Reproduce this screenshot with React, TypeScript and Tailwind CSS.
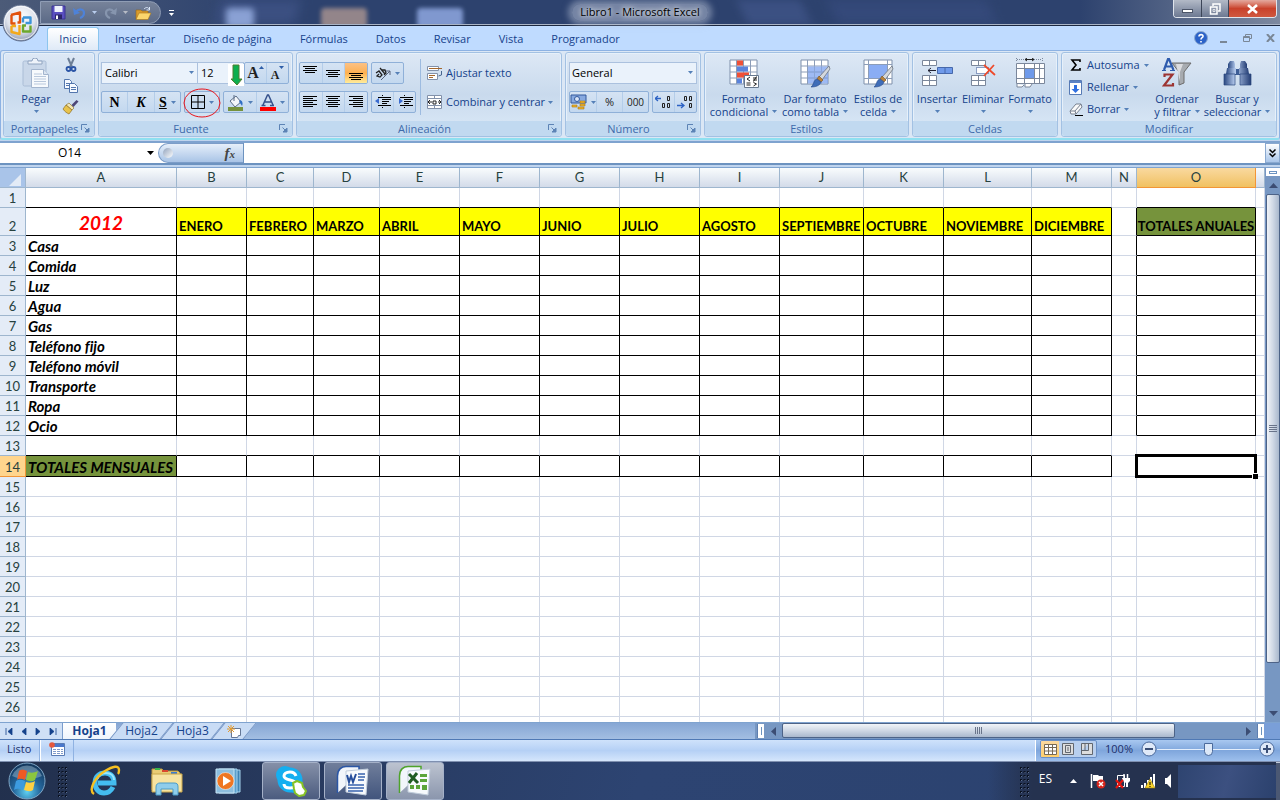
import type { ReactNode } from "react"
import clsx from "clsx"

const tabs = ["Insertar", "Diseño de página", "Fórmulas", "Datos", "Revisar", "Vista", "Programador"]

const columns = [
  { name: "A", width: "w-[151px]" },
  { name: "B", width: "w-[70px]" },
  { name: "C", width: "w-[67px]" },
  { name: "D", width: "w-[66px]" },
  { name: "E", width: "w-[80px]" },
  { name: "F", width: "w-[80px]" },
  { name: "G", width: "w-[80px]" },
  { name: "H", width: "w-[80px]" },
  { name: "I", width: "w-[80px]" },
  { name: "J", width: "w-[84px]" },
  { name: "K", width: "w-[80px]" },
  { name: "L", width: "w-[88px]" },
  { name: "M", width: "w-[80px]" },
  { name: "N", width: "w-[25px]" },
  { name: "O", width: "w-[119px]" },
  { name: "", width: "w-auto" },
]

const months = [
  "ENERO", "FEBRERO", "MARZO", "ABRIL", "MAYO", "JUNIO",
  "JULIO", "AGOSTO", "SEPTIEMBRE", "OCTUBRE", "NOVIEMBRE", "DICIEMBRE",
]

const expenses = [
  "Casa", "Comida", "Luz", "Agua", "Gas", "Teléfono fijo", "Teléfono móvil", "Transporte", "Ropa", "Ocio",
]

const rows = Array.from({ length: 27 }, (_, i) => i + 1)

function hasBox(col: number, row: number) {
  const inRows = (row >= 2 && row <= 12) || row === 14
  return inRows && ((col >= 0 && col <= 12) || col === 14)
}

function cellText(col: number, row: number) {
  if (row === 2) {
    if (col === 0) return "2012"
    if (col === 14) return "TOTALES ANUALES"
    return months[col - 1] ?? ""
  }
  if (col === 0 && row >= 3 && row <= 12) return expenses[row - 3]
  if (col === 0 && row === 14) return "TOTALES MENSUALES"
  return ""
}

function Caret({ className = "fill-[#5580b8]" }: { className?: string }) {
  return (
    <svg width="5" height="3" viewBox="0 0 5 3" className={clsx("shrink-0", className)} aria-hidden="true">
      <path d="M0 0h5L2.500 3z" />
    </svg>
  )
}

/* ---------- Ribbon building blocks ---------- */

function Group({ title, className, launcher, children }: {
  title: string
  className: string
  launcher?: boolean
  children: ReactNode
}) {
  return (
    <section
      className={clsx(
        "flex h-[85px] flex-col rounded-[3px] border border-[#a3c1e3] bg-linear-to-b from-[#dde8f5] via-[#c9daed] to-[#dceaf8] shadow-[inset_0_0_0_1px_#e6f0fa]",
        className,
      )}
    >
      <div className="flex-1 px-[2px]">{children}</div>
      <div className="flex h-[15px] items-center rounded-b-[3px] bg-[#c1d9f0] px-1">
        <span className="flex-1 text-center leading-[15px] text-[#3e6aaa]">{title}</span>
        {launcher && (
          <button aria-label={`Opciones de ${title}`}>
            <svg width="9" height="9" viewBox="0 0 9 9" fill="none" stroke="#5c83b5">
              <path d="M.5 6V.5H6M3.500 3.500l3 3" />
              <path d="M8 4v4H4z" fill="#5c83b5" />
            </svg>
          </button>
        )}
      </div>
    </section>
  )
}

function ButtonBar({ className, children }: { className?: string; children: ReactNode }) {
  return (
    <div
      className={clsx(
        "flex h-[22px] shrink-0 divide-x divide-[#b4cde9] overflow-hidden rounded-[2px] border border-[#8fb0d8] bg-linear-to-b from-[#d5e3f3] to-[#c3d8ef]",
        className,
      )}
    >
      {children}
    </div>
  )
}

function Tool({ label, active, caret, children }: {
  label: string
  active?: boolean
  caret?: boolean
  children: ReactNode
}) {
  return (
    <button
      aria-label={label}
      className={clsx(
        "flex flex-1 items-center justify-center gap-1",
        active && "bg-linear-to-b from-[#fcc184] via-[#fdb04f] to-[#ffec9a]",
      )}
    >
      {children}
      {caret && <Caret />}
    </button>
  )
}

function BigButton({ lines, className, caretBelow, icon }: {
  lines: string[]
  className: string
  caretBelow?: boolean
  icon: ReactNode
}) {
  return (
    <button className={clsx("flex flex-col items-center pt-1 leading-[13px] whitespace-nowrap", className)}>
      <span className="mb-[3px] flex h-8 items-center">{icon}</span>
      {lines.map((line, i) => (
        <span key={line} className="flex items-center gap-1">
          {line}
          {!caretBelow && i === lines.length - 1 && <Caret />}
        </span>
      ))}
      {caretBelow && <span className="flex h-3 items-center"><Caret /></span>}
    </button>
  )
}

function Lines({ spans }: { spans: [number, number, number][] }) {
  return (
    <svg width="15" height="14" viewBox="0 0 15 14" stroke="#000" shapeRendering="crispEdges">
      {spans.map(([x1, x2, y]) => (
        <path key={y} d={`M${x1} ${y + 0.5}H${x2}`} />
      ))}
    </svg>
  )
}

/* ---------- Icons ---------- */

function OfficeLogo() {
  return (
    <svg width="38" height="38" viewBox="0 0 38 38">
      <defs>
        <radialGradient id="orb" cx="50%" cy="35%" r="65%">
          <stop offset="0" stopColor="#fff" />
          <stop offset="0.6" stopColor="#dfe3ec" />
          <stop offset="1" stopColor="#8f9bb3" />
        </radialGradient>
      </defs>
      <circle cx="19" cy="19" r="18" fill="url(#orb)" stroke="#5c6b89" />
      <circle cx="19" cy="19" r="16.500" fill="none" stroke="#fff" strokeOpacity=".7" />
      <g fill="none" strokeWidth="2.400" strokeLinejoin="round">
        <path d="M9 11l9-2.500v10h-2.500M9.500 11v8.500h4" stroke="#e2520c" />
        <path d="M21 13.500h7.500v5.500h-5M21 13.500v5" stroke="#3c94d8" />
        <path d="M9.500 22h4.500M9.500 22v6l8 2v-9" stroke="#f3a91a" />
        <path d="M28.500 21.500v6H21v-6h3" stroke="#6ca82c" />
      </g>
    </svg>
  )
}

function SaveIcon() {
  return (
    <svg width="15" height="15" viewBox="0 0 15 15">
      <path d="M1 1h13v13H1z" fill="#5a4fc0" stroke="#3b3494" />
      <path d="M3.500 1h8v6h-8z" fill="#eef2fb" />
      <path d="M4 9.500h7V14H4z" fill="#2a2568" />
      <path d="M5 10.500h2V14H5z" fill="#fff" />
    </svg>
  )
}

function UndoIcon({ color, flip }: { color: string; flip?: boolean }) {
  return (
    <svg width="13" height="12" viewBox="0 0 13 12">
      <g transform={flip ? "matrix(-1 0 0 1 13 0)" : undefined}>
        <path d="M3 5C6 1 11 2 11 6c0 2-1.500 4-4 5" fill="none" stroke={color} strokeWidth="2.200" />
        <path d="M0 1l1 7 6-2z" fill={color} />
      </g>
    </svg>
  )
}

function FolderIcon() {
  return (
    <svg width="17" height="14" viewBox="0 0 17 14">
      <path d="M1 4h5l1 1h6v8H1z" fill="#d89a2c" stroke="#94651a" strokeWidth=".6" />
      <path d="M4 7h12l-3 6.500H1z" fill="#fbd66c" stroke="#a8771d" strokeWidth=".6" />
      <path d="M9 3c2-2 4-2 5 0M14.500 1v3h-3" fill="none" stroke="#dbe7f8" />
    </svg>
  )
}

function PasteIcon() {
  return (
    <svg width="28" height="30" viewBox="0 0 28 30">
      <rect x="1" y="3" width="23" height="25" rx="1.500" fill="#c9d7e9" stroke="#aabdd6" />
      <path d="M6 6V3h4a3 3 0 016 0h4v3z" fill="#eef3fa" stroke="#90a4c0" />
      <path d="M9.500 11.500h12l5 5v13h-17z" fill="#f7fafd" stroke="#a3b5ce" />
      <path d="M21.500 11.500v5h5" fill="#dbe5f1" stroke="#a3b5ce" />
      <path d="M12 16h8M12 18.500h12M12 21h12M12 23.500h12M12 26h12" stroke="#b9c8dc" />
    </svg>
  )
}

function CutIcon() {
  return (
    <svg width="16" height="16" viewBox="0 0 16 16" fill="none">
      <path d="M5 1l4 9M11 1L7 10" stroke="#6d7e96" strokeWidth="2" />
      <circle cx="5.500" cy="12" r="2" stroke="#2b55a6" strokeWidth="1.800" />
      <circle cx="10.500" cy="12" r="2" stroke="#2b55a6" strokeWidth="1.800" />
    </svg>
  )
}

function CopyIcon() {
  return (
    <svg width="16" height="14" viewBox="0 0 16 14" stroke="#5376ad" fill="#f6faff">
      <path d="M1.500.5h5l2 2v7h-7z" />
      <path d="M3 4.500h4M3 6.500h4" />
      <path d="M6.500 4.500h5l3 3v6h-8z" />
      <path d="M8 8.500h5M8 10.500h5" />
    </svg>
  )
}

function BrushIcon() {
  return (
    <svg width="17" height="16" viewBox="0 0 17 16">
      <path d="M14.500 1l2 1.500-5 5.500-2-2z" fill="#4d4676" />
      <path d="M7 4l5 5-2 2-6-5z" fill="#f3e6b4" stroke="#8f7a34" strokeWidth=".7" />
      <path d="M4 6l6 5-3 4c-2-1-4-2-6-5z" fill="#e8c34c" stroke="#8f7026" strokeWidth=".7" />
    </svg>
  )
}

function GridBase({ fill = "#fff" }: { fill?: string }) {
  return (
    <>
      <path d="M1 1h27v24H1z" fill={fill} stroke="#7f90ab" />
      <path d="M7.500 1v24M14.500 1v24M21.500 1v24M1 7h27M1 13h27M1 19h27" stroke="#8c9db8" />
    </>
  )
}

function ConditionalIcon() {
  return (
    <svg width="30" height="29" viewBox="0 0 30 29">
      <GridBase />
      <path d="M8 1.500h6v5H8zM8 13.500h12v5H8z" fill="#ef5037" />
      <path d="M8 7.500h11v5H8zM8 19.500h5v5H8z" fill="#5a83dc" />
      <path d="M15.500 16.500h14v12h-14z" fill="#fff" stroke="#66788f" />
      <path d="M21 18l-3 2 3 2M17.500 24h4M17.500 26h4M24 19h4M24 21h4M27.500 17.500l-3 5M24.500 23.500l3 1.500-3 2" stroke="#222" fill="none" />
    </svg>
  )
}

function PaintBrush() {
  return (
    <>
      <path d="M29 7l1 3-8 11-3-3z" fill="#d4d8dd" stroke="#6f7680" strokeWidth=".8" />
      <path d="M19 17l4 4-2 2-4-3z" fill="#b9823a" stroke="#77501f" strokeWidth=".6" />
      <path d="M17 20l4 3c-1 4-6 5-10 5 3-2 2-7 6-8z" fill="#3f6db8" stroke="#2b4c8a" strokeWidth=".6" />
    </>
  )
}

function TableStyleIcon() {
  return (
    <svg width="31" height="29" viewBox="0 0 31 29">
      <GridBase />
      <path d="M8 7.500h20v17H8z" fill="#7ea3f0" fillOpacity=".75" />
      <path d="M14.500 7v18M21.500 7v18M8 13h20M8 19h20" stroke="#8ba5d6" />
      <PaintBrush />
    </svg>
  )
}

function CellStyleIcon() {
  return (
    <svg width="31" height="29" viewBox="0 0 31 29">
      <path d="M1 1h28v24H1z" fill="#fff" stroke="#7f90ab" />
      <path d="M5.500 1v24M24.500 1v24M1 5.500h28M1 19.500h28" stroke="#8c9db8" />
      <path d="M6 6h18v13H6z" fill="#8aadf4" />
      <PaintBrush />
    </svg>
  )
}

function InsertIcon() {
  return (
    <svg width="31" height="28" viewBox="0 0 31 28" fill="#fff" stroke="#7b879b">
      <path d="M.5 1.500h14v5H.5zM7.500 1.500v5M.5 16.500h14v10H.5zM7.500 16.500v10M.5 21.500h14" />
      <path d="M15.500 8.500h15v6h-15zM23 8.500v6" fill="#6f9aea" stroke="#4668ab" />
      <path d="M6 11.500h8M9 9l-3 2.500L9 14" fill="none" stroke="#223" />
    </svg>
  )
}

function DeleteIcon() {
  return (
    <svg width="26" height="28" viewBox="0 0 26 28" fill="#fff" stroke="#7b879b">
      <path d="M1.500 1.500h14v5h-14zM8.500 1.500v5M1.500 16.500h14v10h-14zM8.500 16.500v10M1.500 21.500h14" />
      <path d="M6.500 8.500h12v6h-12z" stroke="#2d4b8d" strokeDasharray="1 1" />
      <path d="M14 6l11 10M24 6L14 17" stroke="#ee4a2b" strokeWidth="1.800" fill="none" />
    </svg>
  )
}

function FormatIcon() {
  return (
    <svg width="31" height="30" viewBox="0 0 31 30" fill="#fff" stroke="#7b879b">
      <path d="M1.500 0v4M27.500 0v4M2 1.500h8M19 1.500h8" strokeDasharray="1 1" />
      <path d="M10 1.500h9M12 0l-2 1.500L12 3M17 0l2 1.500L17 3" stroke="#222" fill="none" />
      <path d="M1.500 5.500h28v20h-28zM9.500 5.500v20M19.500 5.500v20M24.500 5.500v20M1.500 10.500h28M1.500 20.500h28" />
      <path d="M10 11h9v9h-9z" fill="#6f9aea" stroke="none" />
      <path d="M2 26v3h5l2-2M10 26v3h5l2-3" />
    </svg>
  )
}

function SortIcon() {
  return (
    <svg width="30" height="30" viewBox="0 0 30 30">
      <path d="M10 5h19l-7 9v11l-5 2V14z" fill="#a7abb0" stroke="#6c6c6c" />
      <path d="M14 6h7l-3 8v10z" fill="#e8e9eb" fillOpacity=".8" />
      <path d="M2 12l4-11h1L11.500 12M4 8.500h5" fill="none" stroke="#2f5cae" strokeWidth="2.200" />
      <path d="M0 12.500h4M8 12.500h5" stroke="#2f5cae" />
      <path d="M2.500 19v-2.500h8L2 27.500h9V25" fill="none" stroke="#9c3433" strokeWidth="2.200" />
    </svg>
  )
}

function BinocularsIcon() {
  return (
    <svg width="29" height="26" viewBox="0 0 29 26">
      <defs>
        <linearGradient id="bino">
          <stop offset="0" stopColor="#294780" />
          <stop offset=".4" stopColor="#b5caed" />
          <stop offset="1" stopColor="#233d74" />
        </linearGradient>
      </defs>
      <path d="M11 9h7v6h-7z" fill="#3d5d96" />
      <path d="M7 1h4l1 3v5H5V4zM18 1h4l2 3v5h-7V4z" fill="url(#bino)" />
      <path d="M4 8h9v6H3zM16 8h9l1 6H16z" fill="url(#bino)" />
      <path d="M1 14h11v11H1zM17 14h11v11H17z" fill="url(#bino)" stroke="#2b4880" strokeWidth=".7" />
    </svg>
  )
}

function Grip() {
  return (
    <svg width="9" height="31" viewBox="0 0 9 31" aria-hidden="true">
      <path d="M1 1v30M4.500 1v30M8 1v30" stroke="#0a1120" strokeWidth="2" strokeDasharray="2 2" />
      <path d="M1.500 2v29M5 2v29M8.500 2v29" stroke="#5d6f92" strokeDasharray="1 3" />
    </svg>
  )
}

function StartOrb() {
  return (
    <svg width="38" height="38" viewBox="0 0 38 38">
      <defs>
        <radialGradient id="start" cx="50%" cy="80%" r="75%">
          <stop offset="0" stopColor="#5fd0f2" />
          <stop offset=".5" stopColor="#24669c" />
          <stop offset="1" stopColor="#14395f" />
        </radialGradient>
      </defs>
      <circle cx="19" cy="19" r="18" fill="url(#start)" stroke="#7fa6c6" />
      <path d="M4 14a16 16 0 0130 0c-8 4-22 4-30 0z" fill="#cfe4f2" fillOpacity=".35" />
      <path d="M11 9c3-2 5-1 8 0l-2 9c-3-1-5-2-8 0z" fill="#ee5a24" />
      <path d="M20 10c3 1 6 1 10-1l-3 9c-3 2-6 1-9 0z" fill="#8cc63e" />
      <path d="M8 19c3-2 6-1 9 0l-2 9c-3-1-6-2-9 0z" fill="#3c9be0" />
      <path d="M18 20c3 1 6 1 9-1l-2 9c-3 2-6 1-9 0z" fill="#fdd043" />
    </svg>
  )
}

function ExplorerEIcon() {
  return (
    <svg width="32" height="32" viewBox="0 0 32 32" fill="none">
      <path d="M24 22c-2 4-5 6-9 6-5 0-9-4-9-10S10 8 16 8s9 4 9 10H9" stroke="#44bdf0" strokeWidth="5" />
      <path d="M25 15c0-4-3-7-8-7-4 0-7 2-9 6" stroke="#9be5fb" strokeWidth="2" />
      <path d="M5 29C-1 25 6 12 16 6 24 1 30 0 30 5c0 1 0 3-1 4" stroke="#f6c021" strokeWidth="2.400" />
    </svg>
  )
}

function FoldersIcon() {
  return (
    <svg width="34" height="30" viewBox="0 0 34 30">
      <path d="M2 3h10l2 2h14l2 2v17H2z" fill="#e9cb74" stroke="#b8953e" />
      <path d="M5 2h5v2H5z" fill="#3bb44a" />
      <path d="M12 4h6v2h-6z" fill="#d9482f" />
      <path d="M21 6h6v2h-6z" fill="#3b7bd0" />
      <path d="M2 8h30v18H2z" fill="#f7e3a1" stroke="#c9a64b" />
      <path d="M6 29v-8c0-3 2-4 4-4h14c3 0 4 1 4 4v8h-5v-6H11v6z" fill="#8fcdec" stroke="#4c9cc8" />
    </svg>
  )
}

function MediaIcon() {
  return (
    <svg width="27" height="26" viewBox="0 0 27 26">
      <path d="M8 2h17v22H8z" fill="#3f83b4" stroke="#a6d3ee" />
      <path d="M4 1h18v24H4z" fill="#5ba0cd" stroke="#a6d3ee" />
      <path d="M1 1h18v24H1z" fill="#8dbede" stroke="#c8e5f5" />
      <circle cx="10.500" cy="13" r="8.500" fill="#ee7622" stroke="#fff" strokeOpacity=".5" />
      <path d="M8 8l8 5-8 5z" fill="#fff" />
    </svg>
  )
}

function SkypeIcon() {
  return (
    <svg width="32" height="32" viewBox="0 0 32 32">
      <circle cx="10" cy="10" r="9" fill="#16aff0" />
      <circle cx="15" cy="15" r="12.500" fill="#16aff0" />
      <circle cx="20" cy="20" r="8" fill="#16aff0" />
      <path d="M21 11c-1-3-4-4-6-4-4 0-6 2-6 4 0 5 12 3 12 8 0 3-3 4-6 4s-6-1-6-4" fill="none" stroke="#fff" strokeWidth="3" />
      <path d="M18 18l4-2 5 2 1 4 3 4-2 4-5 1-4-3-1-4z" fill="#fff" stroke="#86c224" strokeWidth="2" strokeLinejoin="round" />
    </svg>
  )
}

function DocIcon({ color, children }: { color: string; children: ReactNode }) {
  return (
    <svg width="34" height="32" viewBox="0 0 34 32">
      <path d="M1.500 28V11C1.500 4 6 1.500 10 1.500h13V8" fill="#f2f6fb" stroke={color} strokeWidth="1.500" />
      <path d="M10 6l22-2-2 26-20-3z" fill="#f7fafd" stroke="#c0ccdb" />
      {children}
    </svg>
  )
}

/* ---------- Window ---------- */

function TitleBar() {
  return (
    <header className="relative grid h-[26px] shrink-0 grid-cols-[1fr_auto_1fr] border-b border-[#1b2740] bg-linear-to-r from-[#4c5b78] via-[#2d426e] via-20% to-[#2d426e] shadow-[inset_0_-1px_0_#a9b4c6]">
      <div className="pointer-events-none absolute inset-x-0 top-0 bottom-px overflow-hidden" aria-hidden="true">
        <div className="absolute inset-y-0 left-[17%] w-20 -skew-x-12 bg-[#3c5082] blur-[6px]" />
        <div className="absolute inset-y-0 left-[58%] w-16 skew-x-24 bg-[#3b5082] blur-[4px]" />
        <div className="absolute inset-y-0 left-[65%] w-40 skew-x-24 bg-[#34497a] blur-[6px]" />
        <div className="absolute inset-y-0 right-0 w-[200px] bg-linear-to-r from-transparent to-[#7d89a0]" />
        <div className="absolute top-2 left-[226px] h-5 w-7 rounded bg-[#8aa1d4] blur-[3px]" />
        <div className="absolute top-2 left-[321px] h-5 w-[46px] rounded bg-[#93858a] blur-[2px]" />
        <div className="absolute top-2 left-[417px] h-5 w-[46px] rounded bg-[#8098cf] blur-[2px]" />
      </div>
      <div className="relative flex items-center pl-10">
        <div className="flex h-[23px] items-center gap-[7px] rounded-r-full border border-[#8f9db5] bg-linear-to-b from-[#77839a] to-[#5b6a87] pr-2 pl-[10px]">
          <button aria-label="Guardar"><SaveIcon /></button>
          <button aria-label="Deshacer" className="flex items-center gap-[6px]">
            <UndoIcon color="#4e82d8" />
            <Caret className="fill-[#b9cdee]" />
          </button>
          <button aria-label="Rehacer" className="flex items-center gap-[6px]">
            <UndoIcon color="#8695ae" flip />
            <Caret className="fill-[#b7bcc6]" />
          </button>
          <button aria-label="Abrir"><FolderIcon /></button>
        </div>
        <button aria-label="Personalizar barra" className="ml-2 flex flex-col items-center gap-[2px]">
          <span className="h-px w-[5px] bg-white" />
          <Caret className="fill-white" />
        </button>
      </div>
      <h1 className="relative self-center rounded-full bg-[#b9c4d8]/50 px-2 text-[11px] text-black shadow-[0_0_6px_4px_rgb(185_196_216/0.5)] [text-shadow:0_0_4px_#fff,0_0_8px_#fff]">
        Libro1 - Microsoft Excel
      </h1>
      <div className="relative mr-[3px] flex h-[18px] justify-self-end divide-x divide-[#3c4558] overflow-hidden rounded-b-[4px] border border-t-0 border-[#dfe4ec]">
        <button aria-label="Minimizar" className="flex w-7 items-center justify-center bg-linear-to-b from-[#b3bac7] to-[#6d7992]">
          <span className="mt-1 h-1 w-[11px] border border-[#4c5568] bg-white" />
        </button>
        <button aria-label="Restaurar" className="flex w-[27px] items-center justify-center bg-linear-to-b from-[#b3bac7] to-[#6d7992]">
          <svg width="12" height="12" viewBox="0 0 12 12" fill="none" stroke="#fff" strokeWidth="1.500">
            <path d="M4 3V1h7v7H9M1.500 4H8v7H1.500z" />
            <path d="M4 6.500h2v2H4z" strokeWidth=".7" />
          </svg>
        </button>
        <button aria-label="Cerrar" className="flex w-[47px] items-center justify-center bg-linear-to-b from-[#e3a99f] via-[#c9412b] to-[#d0583f]">
          <svg width="11" height="10" viewBox="0 0 11 10" stroke="#fff" strokeWidth="2.600">
            <path d="M1 1l9 8M10 1L1 9" />
          </svg>
        </button>
      </div>
      <button aria-label="Botón de Office" className="absolute top-1 left-[2px] z-10">
        <OfficeLogo />
      </button>
    </header>
  )
}

function RibbonTabs() {
  return (
    <nav className="flex h-6 shrink-0 items-end bg-[#bfdbff] pr-[5px] pl-[47px]">
      <button className="mr-[2px] h-[23px] w-[52px] rounded-t-[3px] border border-b-0 border-[#8cc5ee] bg-linear-to-b from-white to-[#dfeaf7]">
        Inicio
      </button>
      {tabs.map((tab) => (
        <button key={tab} className="h-[22px] shrink-0 px-[14px]">
          {tab}
        </button>
      ))}
      <div className="ml-auto flex items-center gap-3 self-center">
        <button aria-label="Ayuda">
          <svg width="14" height="14" viewBox="0 0 14 14">
            <circle cx="7" cy="7" r="6.500" fill="#2b62c8" stroke="#8da9cf" />
            <path d="M5 5.500C5 3 9.500 3 9 5.500 8.800 6.800 7 6.800 7 8.500M7 10v1.500" fill="none" stroke="#fff" strokeWidth="1.600" />
          </svg>
        </button>
        <button aria-label="Minimizar libro" className="mt-2 mr-1 h-[2px] w-[7px] bg-[#7a8796]" />
        <button aria-label="Restaurar libro" className="mr-[2px]">
          <svg width="9" height="8" viewBox="0 0 9 8" fill="none" stroke="#7a8796">
            <path d="M2.500 2V.5h6v4H7M.5 2.500h6v5h-6zM.5 3.500h6" />
          </svg>
        </button>
        <button aria-label="Cerrar libro">
          <svg width="9" height="8" viewBox="0 0 9 8" stroke="#7a8796" strokeWidth="2">
            <path d="M1 0l7 8M8 0L1 8" />
          </svg>
        </button>
      </div>
    </nav>
  )
}

function Ribbon() {
  return (
    <div className="flex shrink-0 gap-[3px] overflow-hidden rounded-[3px] border border-b-2 border-[#8db2e3] border-b-[#8fe0f0] bg-[#dbe7f5] px-[2px] py-px">
      <Group title="Portapapeles" className="w-[92px] shrink-0" launcher>
        <div className="flex">
          <BigButton lines={["Pegar"]} caretBelow className="ml-2 w-11" icon={<PasteIcon />} />
          <div className="ml-1 flex flex-col items-center gap-[6px] pt-1">
            <button aria-label="Cortar"><CutIcon /></button>
            <button aria-label="Copiar"><CopyIcon /></button>
            <button aria-label="Copiar formato"><BrushIcon /></button>
          </div>
        </div>
      </Group>

      <Group title="Fuente" className="w-[195px] shrink-0" launcher>
        <div className="flex flex-col gap-[7px] pt-[9px]">
          <div className="flex">
            <div className="relative w-[97px]">
              <select aria-label="Fuente" className="h-[22px] w-full appearance-none border border-[#abc1de] bg-[#eaf2fb] pl-[3px] text-black">
                <option>Calibri</option>
              </select>
              <span className="pointer-events-none absolute top-[9px] right-1"><Caret /></span>
            </div>
            <div className="relative w-[46px]">
              <select aria-label="Tamaño de fuente" className="h-[22px] w-full appearance-none border border-l-0 border-[#abc1de] bg-[#eaf2fb] pl-[3px] text-black">
                <option>12</option>
              </select>
              <svg width="16" height="22" viewBox="0 0 16 22" className="pointer-events-none absolute top-[2px] right-0">
                <path d="M0 0h16v22H0z" fill="#fff" />
                <path d="M5 1h6v14h3l-5 6-6-6h2z" fill="#0cae4e" stroke="#4f7c31" />
              </svg>
            </div>
            <ButtonBar className="w-[45px]">
              <Tool label="Aumentar tamaño">
                <span className="font-['Liberation_Serif'] text-[16px] font-bold text-[#222]">A</span>
                <svg width="5" height="3" viewBox="0 0 5 3" className="-ml-1 mb-3 fill-[#2e5ea8]"><path d="M0 3h5L2.500 0z" /></svg>
              </Tool>
              <Tool label="Disminuir tamaño">
                <span className="mt-1 font-['Liberation_Serif'] text-[12px] font-bold text-[#222]">A</span>
                <svg width="5" height="3" viewBox="0 0 5 3" className="-ml-1 mb-3 fill-[#2e5ea8]"><path d="M0 0h5L2.500 3z" /></svg>
              </Tool>
            </ButtonBar>
          </div>
          <div className="flex gap-[3px]">
            <ButtonBar className="w-[80px] font-['Liberation_Serif'] text-[14px] font-bold text-black">
              <Tool label="Negrita">N</Tool>
              <Tool label="Cursiva"><i>K</i></Tool>
              <Tool label="Subrayado" caret><u>S</u></Tool>
            </ButtonBar>
            <div className="relative w-9">
              <ButtonBar>
                <Tool label="Bordes" caret>
                  <svg width="14" height="14" viewBox="0 0 14 14" fill="none" stroke="#000">
                    <path d="M1 .5h12.500v13H.5V.5zM7 1v12M1 7h12" />
                  </svg>
                </Tool>
              </ButtonBar>
              <svg width="38" height="30" viewBox="0 0 38 30" className="pointer-events-none absolute -top-[3px] -left-[1px] z-10">
                <ellipse cx="19" cy="15" rx="18" ry="14" fill="none" stroke="#e8141c" />
              </svg>
            </div>
            <ButtonBar className="w-[66px]">
              <Tool label="Color de relleno" caret>
                <svg width="17" height="17" viewBox="0 0 17 17">
                  <path d="M3 7l6-5 5 6-6 5z" fill="#f3f6fa" stroke="#5b6c86" />
                  <path d="M7 1v6" stroke="#5b6c86" />
                  <path d="M13 6c3 1 3 4 2 6-1-2-2-3-3-4z" fill="#2f6ec4" />
                  <path d="M1 13h15v4H1z" fill="#76923c" />
                </svg>
              </Tool>
              <Tool label="Color de fuente" caret>
                <svg width="16" height="17" viewBox="0 0 16 17">
                  <path d="M3 11L7.500 1h1L13 11M5 8h6M1.500 11.500h4M10 11.500h4" fill="none" stroke="#36528c" strokeWidth="1.500" />
                  <path d="M0 13h16v4H0z" fill="#f00" />
                </svg>
              </Tool>
            </ButtonBar>
          </div>
        </div>
      </Group>

      <Group title="Alineación" className="w-[266px] shrink-0" launcher>
        <div className="flex">
          <div className="flex flex-col gap-[7px] pt-[9px]">
            <div className="flex gap-[3px]">
              <ButtonBar className="w-[69px]">
                <Tool label="Alinear arriba"><Lines spans={[[0, 14, 0], [2, 12, 2], [0, 14, 4], [2, 12, 6]]} /></Tool>
                <Tool label="Alinear en el medio"><Lines spans={[[0, 14, 4], [2, 12, 6], [0, 14, 8], [2, 12, 10]]} /></Tool>
                <Tool label="Alinear abajo" active><Lines spans={[[0, 14, 7], [2, 12, 9], [0, 14, 11], [2, 12, 13]]} /></Tool>
              </ButtonBar>
              <ButtonBar className="w-[33px]">
                <Tool label="Orientación" caret>
                  <svg width="16" height="15" viewBox="0 0 16 15" fill="none" stroke="#222">
                    <path d="M1 7l3-2 3 4-2 2-3-1 2-2M5 2l5 6M7 4l3 0 1 3-2 2" strokeWidth="1.300" />
                    <path d="M6 14l9-9M15 9V5h-4" stroke="#56617a" />
                  </svg>
                </Tool>
              </ButtonBar>
            </div>
            <div className="flex gap-[3px]">
              <ButtonBar className="w-[69px]">
                <Tool label="Izquierda"><Lines spans={[[0, 14, 1], [0, 10, 3], [0, 14, 5], [0, 10, 7], [0, 14, 9], [0, 10, 11]]} /></Tool>
                <Tool label="Centrar"><Lines spans={[[0, 14, 1], [2, 12, 3], [0, 14, 5], [2, 12, 7], [0, 14, 9], [2, 12, 11]]} /></Tool>
                <Tool label="Derecha"><Lines spans={[[0, 14, 1], [4, 14, 3], [0, 14, 5], [4, 14, 7], [0, 14, 9], [4, 14, 11]]} /></Tool>
              </ButtonBar>
              <ButtonBar className="w-[45px]">
                {["Disminuir sangría", "Aumentar sangría"].map((label, i) => (
                  <Tool key={label} label={label}>
                    <svg width="16" height="14" viewBox="0 0 16 14" stroke="#000">
                      <path d="M3 2.500h13M8 4.500h8M8 6.500h6M8 8.500h4M3 10.500h13" />
                      <path d="M7.500 0v14" strokeDasharray="1 1" />
                      <path d={i === 0 ? "M0 6l4-3v6z" : "M6 6L2 3v6z"} fill="#3a6bd0" stroke="none" />
                    </svg>
                  </Tool>
                ))}
              </ButtonBar>
            </div>
          </div>
          <div className="mt-[6px] ml-1 h-[56px] w-px bg-[#9dbbe0]" />
          <div className="flex flex-col gap-[7px] pt-[9px] pl-[6px]">
            <button className="flex h-[22px] items-center gap-[3px]">
              <svg width="16" height="16" viewBox="0 0 16 16" fill="#fff" stroke="#8291aa">
                <path d="M.5 1.500h11v4H.5zM.5 8.500h10v6H.5z" />
                <path d="M2 3.500h13M2 10.500h6M2 12.500h4" stroke="#a4672d" />
                <path d="M14.500 6v4l-3 1" fill="none" stroke="#47668f" />
              </svg>
              Ajustar texto
            </button>
            <button className="flex h-[22px] items-center gap-[3px] whitespace-nowrap">
              <svg width="16" height="16" viewBox="0 0 16 16" fill="#fff" stroke="#8291aa">
                <path d="M.5 1.500h14v13H.5zM7.500 1.500v3M7.500 11v3M.5 4.500h14M.5 11.500h14" />
                <path d="M1 8h4M3 6L1 8l2 2M14 8h-3M12 6l2 2-2 2M6 7h3v3H6z" stroke="#222" fill="none" />
              </svg>
              Combinar y centrar
              <Caret />
            </button>
          </div>
        </div>
      </Group>

      <Group title="Número" className="w-[136px] shrink-0" launcher>
        <div className="flex flex-col gap-[7px] pt-[9px] pl-px">
          <div className="relative w-32">
            <select aria-label="Formato de número" className="h-[22px] w-full appearance-none border border-[#abc1de] bg-[#eaf2fb] pl-[2px] text-black">
              <option>General</option>
            </select>
            <span className="pointer-events-none absolute top-[9px] right-1"><Caret /></span>
          </div>
          <div className="flex gap-[3px]">
            <ButtonBar className="w-[80px] text-[#222]">
              <Tool label="Formato de contabilidad" caret>
                <svg width="17" height="16" viewBox="0 0 17 16">
                  <path d="M1 1h15v8H1z" fill="#87a9df" stroke="#33599c" />
                  <circle cx="7" cy="5" r="2.500" fill="#d8e4f8" stroke="#33599c" />
                  <path d="M10 7h5v2h-5zM10 10h5v2h-5zM8 13h6v2H8zM2 11h5v2H2z" fill="#f0b62c" stroke="#a97612" strokeWidth=".6" />
                </svg>
              </Tool>
              <Tool label="Porcentaje"><span>%</span></Tool>
              <Tool label="Millares"><span className="text-[10px]">000</span></Tool>
            </ButtonBar>
            <ButtonBar className="w-[45px] text-[#222]">
              {["Aumentar decimales", "Disminuir decimales"].map((label, i) => (
                <Tool key={label} label={label}>
                  <svg width="17" height="15" viewBox="0 0 17 15" fill="none" stroke="#222">
                    <path d="M12.500 1.500h2v4h-2zM12.500 8.500h2v4h-2z" />
                    <path d={i === 0 ? "M7.500 8.500h2v4h-2z" : "M7.500 1.500h2v4h-2z"} />
                    <path d={i === 0 ? "M0 3.500h6M3 1L0 3.500 3 6" : "M0 10.500h7M4 8l3 2.500L4 13"} stroke="#2c62c4" strokeWidth="1.300" />
                  </svg>
                </Tool>
              ))}
            </ButtonBar>
          </div>
        </div>
      </Group>

      <Group title="Estilos" className="w-[205px] shrink-0">
        <div className="flex pl-px">
          <BigButton lines={["Formato", "condicional"]} className="w-[71px]" icon={<ConditionalIcon />} />
          <BigButton lines={["Dar formato", "como tabla"]} className="w-[72px]" icon={<TableStyleIcon />} />
          <BigButton lines={["Estilos de", "celda"]} className="w-[54px]" icon={<CellStyleIcon />} />
        </div>
      </Group>

      <Group title="Celdas" className="w-[146px] shrink-0">
        <div className="flex">
          <BigButton lines={["Insertar"]} caretBelow className="w-11" icon={<InsertIcon />} />
          <BigButton lines={["Eliminar"]} caretBelow className="w-12" icon={<DeleteIcon />} />
          <BigButton lines={["Formato"]} caretBelow className="w-[46px]" icon={<FormatIcon />} />
        </div>
      </Group>

      <Group title="Modificar" className="min-w-[215px] flex-1">
        <div className="flex pl-px">
          <div className="flex w-[86px] flex-col pt-px pl-1">
            <button className="flex h-[22px] items-center gap-1">
              <svg width="14" height="12" viewBox="0 0 14 12" fill="none" stroke="#000" strokeWidth="1.600">
                <path d="M11 3V1H3l4 5-4 5h8V9" />
              </svg>
              Autosuma <Caret />
            </button>
            <button className="flex h-[22px] items-center gap-1">
              <svg width="14" height="15" viewBox="0 0 14 15">
                <path d="M.5.5h12v14H.5z" fill="#fff" stroke="#567ab5" />
                <path d="M1 1h11v2H1z" fill="#5c83c5" />
                <path d="M5 5h3v4h2.500l-4 4-4-4H5z" fill="#2f6fe0" />
              </svg>
              Rellenar <Caret />
            </button>
            <button className="flex h-[22px] items-center gap-1">
              <svg width="14" height="13" viewBox="0 0 14 13">
                <path d="M7 1h5l1 3-6 7H2L1 8z" fill="#fafafa" stroke="#77808f" />
                <path d="M1 8h5l6-7M6 8l1 3" fill="none" stroke="#77808f" />
                <path d="M6 12.500h8" stroke="#000" />
              </svg>
              Borrar <Caret />
            </button>
          </div>
          <BigButton lines={["Ordenar", "y filtrar"]} className="w-[52px]" icon={<SortIcon />} />
          <BigButton lines={["Buscar y", "seleccionar"]} className="w-[68px]" icon={<BinocularsIcon />} />
        </div>
      </Group>
    </div>
  )
}

function FormulaBar() {
  return (
    <div className="mt-px flex h-6 shrink-0 border-y-2 border-[#6d93c0] border-t-[#7fa3cf] bg-white text-black">
      <div className="flex w-[158px] items-center">
        <input aria-label="Cuadro de nombres" defaultValue="O14" className="w-full min-w-0 flex-1 pr-2 text-center text-[12px] outline-none" />
        <button aria-label="Nombres" className="mr-1">
          <svg width="7" height="4" viewBox="0 0 7 4"><path d="M0 0h7L3.500 4z" /></svg>
        </button>
      </div>
      <div className="flex w-[85px] items-center justify-between rounded-l-full border border-r-0 border-[#7c9dc8] bg-linear-to-b from-[#e6effa] to-[#a9c4e6] pr-2 pl-1">
        <span className="size-[10px] rounded-full bg-linear-to-br from-[#93a4bd] to-white" />
        <button aria-label="Insertar función" className="font-['Liberation_Serif'] text-[15px] leading-none font-bold text-[#444] italic">
          f<span className="text-[11px]">x</span>
        </button>
      </div>
      <input aria-label="Barra de fórmulas" className="min-w-0 flex-1 border-l border-[#6d93c0] px-1 outline-none" />
      <button aria-label="Expandir barra de fórmulas" className="flex w-[15px] items-center justify-center border border-[#8aa9d0] bg-linear-to-b from-white to-[#a9c6ea]">
        <svg width="7" height="9" viewBox="0 0 7 9" fill="none" stroke="#000" strokeWidth="1.500">
          <path d="M.5.5l3 3 3-3M.5 4.500l3 3 3-3" />
        </svg>
      </button>
    </div>
  )
}

function Cell({ col, row }: { col: number; row: number }) {
  const text = cellText(col, row)
  const box = hasBox(col, row)
  return (
    <td
      className={clsx(
        "border-r border-b py-0 align-bottom leading-[18px] font-bold whitespace-nowrap",
        box || hasBox(col, row + 1) ? "border-b-black" : "border-b-[#d0d7e5]",
        box || hasBox(col + 1, row) ? "border-r-black" : "border-r-[#d0d7e5]",
        col === 14 ? "px-0 text-center" : "px-[2px]",
        col > 0 && "text-[13px]",
        row === 2 && col > 0 && col < 13 && "bg-[#ffff00]",
        row === 2 && col === 0 && "text-center text-[19px] leading-[25px] text-[#ff0000] italic",
        row !== 2 && col === 0 && "text-[15px] italic",
        row === 14 && col === 0 && "bg-[#76933c]",
        row === 2 && col === 14 && "bg-[#76933c]",
        row === 14 && col === 14 && "relative",
      )}
    >
      {text}
      {row === 14 && col === 14 && (
        <div className="absolute -inset-[2px] border-[3px] border-black">
          <span className="absolute -right-[4px] -bottom-[4px] size-[6px] border-t border-l border-white bg-black" />
        </div>
      )}
    </td>
  )
}

function Sheet() {
  return (
    <div className="mt-[2px] flex min-h-0 flex-1 border-t border-[#7fa3cf] bg-white">
      <div className="min-w-0 flex-1 overflow-hidden">
        <table className="w-full table-fixed border-separate border-spacing-0 font-[Lato,'Liberation_Sans',sans-serif] text-black [font-variant-ligatures:none]">
          <thead>
            <tr className="h-5 text-[13px] leading-[19px] text-[#27413e]">
              <th className="w-[26px] border-r border-b border-[#9eb6ce] bg-[#a9c4e9] p-0">
                <svg width="12" height="12" viewBox="0 0 12 12" className="mt-1 mr-1 ml-auto fill-[#e3ebf6]" aria-hidden="true">
                  <path d="M12 0v12H0z" />
                </svg>
              </th>
              {columns.map((col) => (
                <th
                  key={col.name}
                  className={clsx(
                    "border-r border-b p-0 font-normal",
                    col.width,
                    col.name === "O"
                      ? "border-[#f29536] bg-linear-to-b from-[#f9d99f] to-[#f1c15f]"
                      : "border-[#9eb6ce] bg-linear-to-b from-[#f9fcfd] to-[#d3dbe9]",
                  )}
                >
                  {col.name}
                </th>
              ))}
            </tr>
          </thead>
          <tbody>
            {rows.map((row) => (
              <tr key={row} className={row === 2 ? "h-7" : row === 14 ? "h-[21px]" : "h-5"}>
                <th
                  className={clsx(
                    "border-r border-b p-0 align-bottom text-[13px] leading-[18px] font-normal text-[#27413e]",
                    row === 14 ? "border-[#f29536] bg-[#ffd58d]" : "border-[#9eb6ce] bg-[#e4ecf7]",
                  )}
                >
                  {row < 27 && row}
                </th>
                {columns.map((col, i) => (
                  <Cell key={col.name} col={i} row={row} />
                ))}
              </tr>
            ))}
          </tbody>
        </table>
      </div>
      <div className="flex w-[15px] shrink-0 flex-col border-l border-[#7596c4] bg-[#7797c2]">
        <div className="flex h-2 items-center justify-center bg-white"><span className="h-[3px] w-2 border border-[#6d93c0]" /></div>
        <button aria-label="Subir" className="flex h-[18px] shrink-0 items-center justify-center">
          <svg width="9" height="5" viewBox="0 0 9 5" fill="#3c4d73"><path d="M0 5h9L4.500 0z" /></svg>
        </button>
        <div className="min-h-0 flex-1">
          <div className="flex h-[92%] flex-col items-center justify-center gap-[1px] rounded-[2px] border border-[#4d6387] bg-linear-to-r from-[#f1f4f8] via-[#cfd8e5] to-[#a9b8cd]">
            <span className="h-px w-2 bg-[#69748a]" />
            <span className="h-px w-2 bg-[#69748a]" />
            <span className="h-px w-2 bg-[#69748a]" />
            <span className="h-px w-2 bg-[#69748a]" />
          </div>
        </div>
        <button aria-label="Bajar" className="flex h-[18px] shrink-0 items-center justify-center">
          <svg width="9" height="5" viewBox="0 0 9 5" fill="#3c4d73"><path d="M0 0h9L4.500 5z" /></svg>
        </button>
      </div>
    </div>
  )
}

const navIcons = [
  { label: "Primera hoja", d: "M1 0v7M7 0v7L3 3.500z" },
  { label: "Hoja anterior", d: "M6 0v7L2 3.500z" },
  { label: "Hoja siguiente", d: "M2 0v7l4-3.500z" },
  { label: "Última hoja", d: "M7 0v7M1 0v7l4-3.500z" },
]

const slantedTab =
  "relative isolate flex items-center justify-center before:absolute before:inset-0 before:-z-10 before:-skew-x-[39deg] before:border-x before:border-[#6f8fbf] before:bg-[#c9dcf5]"

function SheetTabs() {
  return (
    <div className="flex h-[17px] shrink-0 border-t border-[#7fa3cf] bg-linear-to-b from-[#86a6d4] to-[#a3bee2] text-[12px]">
      <div className="flex min-w-0 flex-1">
        <div className="flex w-[63px] items-center justify-around border-r border-[#7a9ccc] bg-[#cfe0f6] px-[2px]">
          {navIcons.map((icon) => (
            <button key={icon.label} aria-label={icon.label}>
              <svg width="8" height="7" viewBox="0 0 8 7" fill="#15428b" stroke="#15428b" strokeWidth=".8"><path d={icon.d} /></svg>
            </button>
          ))}
        </div>
        <button className="w-[53px] bg-linear-to-b from-white to-[#eef4fc] text-center leading-4 font-bold">Hoja1</button>
        <button className={clsx(slantedTab, "w-[51px]")}>Hoja2</button>
        <button className={clsx(slantedTab, "w-[51px]")}>Hoja3</button>
        <button aria-label="Insertar hoja" className={clsx(slantedTab, "w-8")}>
          <svg width="15" height="13" viewBox="0 0 15 13">
            <path d="M4.500 3.500h9v7h-2l-1 2h-6z" fill="#fff" stroke="#647796" />
            <path d="M4 0v8M0 4h8M1 1l6 6M7 1L1 7" stroke="#e49a2d" />
          </svg>
        </button>
      </div>
      <div className="flex w-[41%] bg-[#7797c2]">
        <span className="my-px ml-[2px] flex w-[7px] items-center border-l border-[#5e7fb0] bg-white pl-[3px]"><span className="h-2 w-px bg-[#6d93c0]" /></span>
        <button aria-label="Desplazar a la izquierda" className="flex w-[18px] items-center justify-center">
          <svg width="5" height="9" viewBox="0 0 5 9" fill="#3c4d73"><path d="M5 0v9L0 4.500z" /></svg>
        </button>
        <div className="min-w-0 flex-1">
          <div className="flex h-[15px] w-[86%] items-center justify-center gap-[1px] rounded-[2px] border border-[#4d6387] bg-linear-to-b from-[#f1f4f8] via-[#cfd8e5] to-[#a9b8cd]">
            <span className="h-[7px] w-px bg-[#69748a]" />
            <span className="h-[7px] w-px bg-[#69748a]" />
            <span className="h-[7px] w-px bg-[#69748a]" />
            <span className="h-[7px] w-px bg-[#69748a]" />
          </div>
        </div>
        <button aria-label="Desplazar a la derecha" className="flex w-[18px] items-center justify-center">
          <svg width="5" height="9" viewBox="0 0 5 9" fill="#3c4d73"><path d="M0 0v9l5-4.500z" /></svg>
        </button>
        <span className="my-px flex w-[7px] items-center border-l border-[#5e7fb0] bg-white pl-[3px]"><span className="h-2 w-px bg-[#6d93c0]" /></span>
        <span className="w-4 bg-[#7a9fd8]" />
      </div>
    </div>
  )
}

function ZoomButton({ label, d }: { label: string; d: string }) {
  return (
    <button aria-label={label}>
      <svg width="16" height="16" viewBox="0 0 16 16">
        <circle cx="8" cy="8" r="7" fill="#dfe9f8" stroke="#4b6a9c" />
        <path d={d} stroke="#3b4f76" strokeWidth="2" />
      </svg>
    </button>
  )
}

function StatusBar() {
  return (
    <footer className="flex h-[22px] shrink-0 items-stretch border-t border-[#4f79b5] bg-linear-to-b from-[#cfe2fb] via-[#b5d0f5] to-[#d5e6fc] text-[#1c2f6b]">
      <span className="flex w-10 items-center border-r border-[#8fb2e2] pb-[2px] pl-[7px]">Listo</span>
      <button aria-label="Grabar macro" className="flex w-[34px] items-center justify-center border-r border-l border-l-white border-r-[#8fb2e2] pb-[3px]">
        <svg width="16" height="14" viewBox="0 0 16 14">
          <path d="M2.500 1.500h13v12h-13z" fill="#fff" stroke="#5a7cb4" />
          <path d="M3 2h12v3H3z" fill="#4a78cc" />
          <path d="M4 7.500h10M4 9.500h10M4 11.500h10" stroke="#7f9acb" strokeDasharray="3 1" />
          <circle cx="3" cy="3" r="2.800" fill="#e4573c" />
        </svg>
      </button>
      <div className="ml-auto flex items-center border-l border-white bg-linear-to-b from-[#a9c8f0] via-[#7fa6dc] to-[#9dbfec] pr-[5px] pb-[3px] pl-1">
        <div className="flex h-[18px] overflow-hidden rounded-[2px] border border-[#6a8fc6] bg-[#b8cfee]">
          <button aria-label="Normal" className="flex w-[18px] items-center justify-center bg-linear-to-b from-[#fbd9a0] to-[#ffcf6a]">
            <svg width="13" height="11" viewBox="0 0 13 11" fill="#fff" stroke="#776a55"><path d="M.5.5h12v10H.5zM4.500.5v10M8.500.5v10M.5 3.500h12M.5 7h12" /></svg>
          </button>
          <button aria-label="Diseño de página" className="flex w-[18px] items-center justify-center">
            <svg width="12" height="12" viewBox="0 0 12 12" fill="#ddd" stroke="#62676f"><path d="M.5.5h11v11H.5zM3.500 2.500h5v7h-5zM5 5h2M5 7h2" /></svg>
          </button>
          <button aria-label="Vista previa de salto de página" className="flex w-[19px] items-center justify-center">
            <svg width="12" height="12" viewBox="0 0 12 12" fill="#ddd" stroke="#62676f"><path d="M.5.5h11v11H.5zM.5 7.500h7v-7M4 .5v7" /></svg>
          </button>
        </div>
        <button className="w-[44px]">100%</button>
        <ZoomButton label="Alejar" d="M4 8h8" />
        <input
          type="range"
          aria-label="Zoom"
          defaultValue={50}
          className="h-4 w-[102px] appearance-none bg-[linear-gradient(#e3eefc,#e3eefc)] bg-[length:100%_1px] bg-center bg-no-repeat [&::-webkit-slider-thumb]:h-[13px] [&::-webkit-slider-thumb]:w-[9px] [&::-webkit-slider-thumb]:appearance-none [&::-webkit-slider-thumb]:rounded-b-full [&::-webkit-slider-thumb]:border [&::-webkit-slider-thumb]:border-[#4b6a9c] [&::-webkit-slider-thumb]:bg-[#dce8f8]"
        />
        <ZoomButton label="Acercar" d="M4 8h8M8 4v8" />
      </div>
    </footer>
  )
}

const runningButton = "flex h-[38px] w-[58px] items-center justify-center rounded-[3px] border border-[#a5b1c8]"

function Taskbar() {
  return (
    <div className="flex h-[39px] shrink-0 items-center border-t border-[#7f90b0] bg-linear-105 from-[#22304d] via-[#2d4472] to-[#2b426f] text-white">
      <button aria-label="Inicio" className="ml-2"><StartOrb /></button>
      <span className="ml-3"><Grip /></span>
      <button aria-label="Internet Explorer" className="ml-[22px]"><ExplorerEIcon /></button>
      <button aria-label="Explorador de Windows" className="ml-[29px]"><FoldersIcon /></button>
      <button aria-label="Reproductor multimedia" className="ml-[31px]"><MediaIcon /></button>
      <div className="ml-[20px] flex gap-1">
        <button aria-label="Skype" className={clsx(runningButton, "bg-linear-to-b from-[#8590a8] to-[#4c5c7f]")}><SkypeIcon /></button>
        <button aria-label="Microsoft Word" className={clsx(runningButton, "bg-linear-to-b from-[#707e9b] to-[#42557d]")}>
          <DocIcon color="#2b56a5">
            <path d="M11 10l2 7 2-6 2 6 3-8" fill="none" stroke="#264e9c" strokeWidth="2" />
            <path d="M22 9h7M22 12h7M22 15h6M12 20h16M12 23h16M12 26h15" stroke="#3963ad" strokeWidth="1.600" />
          </DocIcon>
        </button>
        <button aria-label="Microsoft Excel" className={clsx(runningButton, "bg-linear-to-b from-[#bcc3d0] to-[#8b96ad]")}>
          <DocIcon color="#4ea32b">
            <path d="M11 9l9 9M19 8l-8 10" stroke="#1f5c22" strokeWidth="3" />
            <path d="M22 9h7v3h-7zM22 14h7v3h-7zM12 20h4v4h-4zM18 20h4v4h-4zM24 20h5v5h-5z" fill="#5ba53a" />
          </DocIcon>
        </button>
      </div>
      <div className="ml-auto flex h-full items-center bg-linear-to-r from-transparent via-[#25324f] via-15% to-[#25324f] pl-8">
        <Grip />
        <span className="ml-[10px] pb-1 text-[12px]">ES</span>
        <div className="ml-[18px] flex items-center gap-[9px]">
          <button aria-label="Mostrar iconos ocultos" className="mr-1">
            <svg width="7" height="4" viewBox="0 0 7 4" fill="#fff"><path d="M0 4h7L3.500 0z" /></svg>
          </button>
          <svg width="16" height="16" viewBox="0 0 16 16" aria-label="Centro de actividades">
            <path d="M1.500 1v14" stroke="#fff" strokeWidth="1.500" />
            <path d="M3 2h5l1 1h4v6H8L7 8H3z" fill="#fff" />
            <circle cx="11" cy="11" r="4.500" fill="#d9261c" />
            <path d="M9 9l4 4M13 9l-4 4" stroke="#fff" strokeWidth="1.500" />
          </svg>
          <svg width="16" height="16" viewBox="0 0 16 16" aria-label="Batería">
            <path d="M2.500 2.500h7v11h-7z" fill="none" stroke="#fff" />
            <path d="M9 1v4M12.500 1v4" stroke="#fff" strokeWidth="1.500" />
            <path d="M7 5h8v3l-2 2v4h-2v-4L8 8z" fill="#fff" />
            <path d="M1 7l7 8M8 7l-7 8" stroke="#e3150e" strokeWidth="2.200" />
          </svg>
          <svg width="16" height="16" viewBox="0 0 16 16" aria-label="Red">
            <path d="M1 12h2v3H1zM4 10h2v5H4zM7 7h2v8H7zM10 4h2v11h-2zM13 1h2v14h-2z" fill="#fff" />
            <path d="M10 6l5 9H5z" fill="#fbd52b" stroke="#9a7d08" strokeWidth=".6" />
            <path d="M10 9v3M10 13v1" stroke="#000" />
          </svg>
          <svg width="7" height="14" viewBox="0 0 7 14" fill="#fff" aria-label="Volumen"><path d="M0 4h2l4-4v14l-4-4H0z" /></svg>
        </div>
        <div className="ml-[6px] h-[33px] w-[98px] bg-linear-105 from-[#2e4470] via-[#3c5080] to-[#2b416d]" />
        <button aria-label="Mostrar escritorio" className="h-full w-1 border-t border-[#c2cad8] bg-[#4b5873]" />
      </div>
    </div>
  )
}

export default function App() {
  return (
    <div className="flex h-screen flex-col overflow-hidden bg-[#bfd4ee] font-['Open_Sans','Noto_Sans',sans-serif] text-[11px] text-[#15428b]">
      <TitleBar />
      <RibbonTabs />
      <Ribbon />
      <FormulaBar />
      <Sheet />
      <SheetTabs />
      <StatusBar />
      <Taskbar />
    </div>
  )
}
